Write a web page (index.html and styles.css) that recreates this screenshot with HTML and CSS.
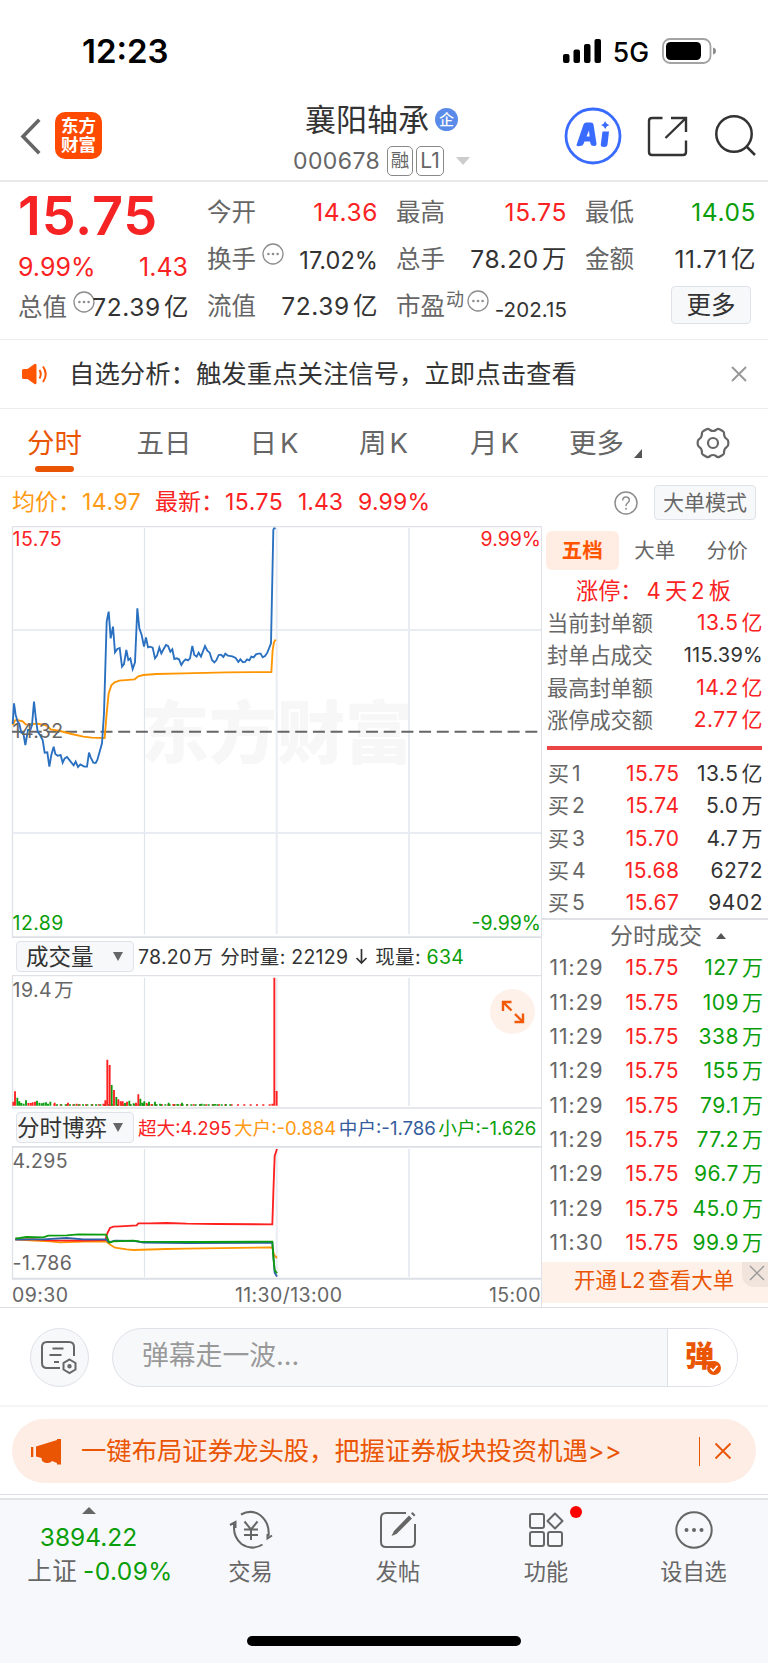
FILE: index.html
```html
<!DOCTYPE html>
<html lang="zh-CN">
<head>
<meta charset="utf-8">
<title>襄阳轴承 000678</title>
<link rel="stylesheet" href="styles.css">
</head>
<body>
<svg class="defs" width="0" height="0">
  <symbol id="dots" viewBox="0 0 22 22"><circle cx="11" cy="11" r="10" fill="none" stroke="#8c8c8c" stroke-width="1.3"/><g fill="#8c8c8c"><circle cx="6.4" cy="11" r="1.3"/><circle cx="11" cy="11" r="1.3"/><circle cx="15.6" cy="11" r="1.3"/></g></symbol>
</svg>

<div class="status">
  <span class="clock">12:23</span>
  <div class="status-right">
    <svg width="39" height="24" viewBox="0 0 39 24"><rect x="0" y="15" width="6.5" height="9" rx="2"/><rect x="10.5" y="10.5" width="6.5" height="13.5" rx="2"/><rect x="21" y="5" width="6.5" height="19" rx="2"/><rect x="31.5" y="0" width="6.5" height="24" rx="2"/></svg>
    <span class="net">5G</span>
    <svg width="56" height="26" viewBox="0 0 56 26"><rect x="1" y="1" width="47.5" height="24" rx="7" fill="none" stroke="#a3a3a3" stroke-width="1.8"/><rect x="4" y="4" width="35" height="18" rx="4.5"/><path d="M51 9.5q3 .8 3 3.5t-3 3.5z" fill="#8d8d8d"/></svg>
  </div>
</div>

<header class="header">
  <svg class="back" width="22" height="38" viewBox="0 0 22 38"><path d="M19 4L4 19.500L19 35" fill="none" stroke="#666" stroke-width="3.6" stroke-linecap="square"/></svg>
  <div class="logo"><span>东方</span><span>财富</span></div>
  <div class="title">
    <div class="name"><span>襄阳轴承</span><i class="corp">企</i></div>
    <div class="code"><span>000678</span><i class="tag">融</i><i class="tag l1">L1</i><svg width="14" height="8" viewBox="0 0 14 8"><path d="M0 0h14L7 8z" fill="#ccc"/></svg></div>
  </div>
  <div class="tools">
    <svg width="58" height="58" viewBox="0 0 58 58"><circle cx="29" cy="29" r="27" fill="#fff" stroke="#3a6bff" stroke-width="2.8"/><path d="M12.500 38L19.500 17.500Q20.300 15.500 22.500 15.500H27Q29 15.500 29.500 17.500L32.500 36.500Q32.800 39 30 39Q27 39 26.500 36.500L26 34.500H20.500L19.500 37Q18.700 39 16 39Q12 39.500 12.500 38ZM22.500 29.500H25.600L25 23.500Z" fill="#3a6bff" fill-rule="evenodd"/><path d="M38.500 24.500H45L43.500 37.500Q43 40 40 40Q36.500 40 36.800 37.500ZM41.200 14Q42 17.200 45.500 18Q42 19 41.200 22Q40.300 19 37 18Q40.300 17.200 41.200 14Z" fill="#3a6bff"/></svg>
    <svg width="44" height="44" viewBox="0 0 44 44" fill="none" stroke="#333" stroke-width="2.4"><path d="M17.500 4H7Q4 4 4 7V38Q4 41 7 41H38Q41 41 41 38V26.500M26 4H41V18M41 4L20.500 24"/></svg>
    <svg width="44" height="44" viewBox="0 0 44 44" fill="none" stroke="#333" stroke-width="2.500"><circle cx="21" cy="20" r="17.700"/><path d="M33.500 32.500L42 41"/></svg>
  </div>
</header>

<section class="quote">
  <div class="q-left">
    <div class="price">15.75</div>
    <div class="chg"><span>9.99%</span><span>1.43</span></div>
    <div class="cell"><label>总值</label><svg class="ic over"><use href="#dots"/></svg><b>72.39<u>亿</u></b></div>
  </div>
  <div class="q-col">
    <div class="cell"><label>今开</label><b class="red">14.36</b></div>
    <div class="cell"><label>换手</label><svg class="ic"><use href="#dots"/></svg><b class="pct">17.02%</b></div>
    <div class="cell"><label>流值</label><b>72.39<u>亿</u></b></div>
  </div>
  <div class="q-col">
    <div class="cell"><label>最高</label><b class="red">15.75</b></div>
    <div class="cell"><label>总手</label><b>78.20<u>万</u></b></div>
    <div class="cell"><label>市盈</label><sup>动</sup><svg class="ic pe"><use href="#dots"/></svg><b class="small">-202.15</b></div>
  </div>
  <div class="q-col">
    <div class="cell"><label>最低</label><b class="green">14.05</b></div>
    <div class="cell"><label>金额</label><b>11.71<u>亿</u></b></div>
    <div class="cell"><span class="more">更多</span></div>
  </div>
</section>

<div class="notice">
  <svg width="28" height="24" viewBox="0 0 28 24"><path d="M1 8.500Q1 7 2.500 7H6.500L13.500 2Q15 1.200 15.500 3V21Q15 22.800 13.500 22L6.500 17H2.500Q1 17 1 15.500Z" fill="#ff5500"/><path d="M18.500 8Q21 12 18.500 16.500M22 4.500Q27.500 12 22 20" fill="none" stroke="#ff5500" stroke-width="2"/></svg>
  <span>自选分析：触发重点关注信号，立即点击查看</span>
  <svg class="x" width="16" height="16" viewBox="0 0 16 16"><path d="M1 1L15 15M15 1L1 15" stroke="#999" stroke-width="2"/></svg>
</div>

<nav class="tabs">
  <span class="on">分时</span><span>五日</span><span>日<u>K</u></span><span>周<u>K</u></span><span>月<u>K</u></span>
  <span class="tmore">更多<svg width="8" height="9" viewBox="0 0 8 9"><path d="M8 0V9H0z" fill="#555"/></svg></span>
  <svg width="34" height="32" viewBox="0 0 34 32" fill="none" stroke="#666" stroke-width="2.200"><circle cx="17" cy="16" r="5"/><path stroke-linejoin="round" d="M10 2.500Q12.500 1 14 3Q17 5 20 3Q21.500 1 24 2.500L27 4.300Q28.500 5.300 28 7.500Q28.500 11 31 12.300Q32.500 13 32.300 16Q32.500 19 31 19.700Q28.500 21 28 24.500Q28.500 26.700 27 27.700L24 29.500Q21.500 31 20 29Q17 27 14 29Q12.500 31 10 29.500L7 27.700Q5.500 26.700 6 24.500Q5.500 21 3 19.700Q1.500 19 1.700 16Q1.500 13 3 12.300Q5.500 11 6 7.500Q5.500 5.300 7 4.300Z"/></svg>
</nav>

<div class="info">
  <span class="avg">均价：<em>14.97</em></span>
  <span class="last">最新：<em>15.75</em></span>
  <span class="red d1">1.43</span>
  <span class="red d2">9.99%</span>
  <svg width="24" height="24" viewBox="0 0 24 24" fill="none" stroke="#8c8c8c" stroke-width="1.500"><circle cx="12" cy="12" r="11"/><path d="M8.700 9.500Q8.700 6 12 6T15.300 9.300Q15.300 10.800 13.500 12Q12 13 12 15M12 16.800V18.700"/></svg>
  <span class="mode">大单模式</span>
</div>

<main class="board">
  <div class="charts">
    <svg class="chart" width="541" height="412" viewBox="0 526 541 412">
      <g class="watermark"><text x="141" y="758" textLength="272">东方财富</text></g>
      <path class="frame" d="M12.500 938V526.500H541"/>
      <path class="grid thin" d="M144.500 528V934"/>
      <path class="grid" d="M13 630H541M13 833H541M409 528V934M276.700 528V934"/>
      <path class="frame b" d="M12 937.300H541"/>
      <path d="M12 731.700H541" stroke="#666" stroke-width="2" stroke-dasharray="12 5.700"/>
      <g transform="translate(0 500) scale(.33333)" fill="none" stroke-width="5.600" stroke-linejoin="miter">
        <polyline stroke="#ff9500" points="38,675 45,661 52,660 68,664 77,673 95,674 105,671 118,672 138,676 152,688 180,693 215,702 250,710 275,713 314,714 320,640 326,580 334,556 344,547 358,542 404,538 415,529 430,525 470,522 550,520 680,517 814,516 818,450 822,426 827,419"/>
        <polyline stroke="#2a70c0" points="38,672 42,610 47,645 53,665 58,672 64,698 70,700 76,735 84,690 91,690 96,675 102,605 108,660 113,695 120,705 128,720 134,758 142,757 148,800 154,765 161,740 166,762 173,767 182,765 188,788 194,775 201,771 212,785 221,796 227,785 234,801 241,793 253,800 261,800 267,758 272,772 280,788 287,789 292,780 306,730 312,640 320,365 326,335 332,415 339,380 345,457 352,447 359,444 366,500 372,492 379,450 385,480 391,475 398,507 405,487 412,325 418,385 425,405 432,440 438,412 444,442 450,440 458,443 465,475 471,467 478,443 484,460 491,447 498,435 504,438 511,455 517,448 523,477 530,475 537,478 544,495 550,485 557,478 564,481 570,475 577,438 583,465 590,470 596,458 603,470 615,438 622,452 629,458 636,480 643,487 649,481 656,465 663,464 670,471 676,461 684,467 697,469 707,474 715,486 721,478 729,487 735,486 741,478 748,481 754,470 761,472 768,463 775,461 782,461 788,472 795,468 802,458 813,430 820,90 822,85 827,85"/>
      </g>
      <g class="axis"><text class="f-red" x="12.500" y="545.500">15.75</text><text class="f-red end" x="541" y="545.500">9.99%</text><text x="12.500" y="738">14.32</text><text class="f-green" x="12.500" y="930">12.89</text><text class="f-green end" x="541" y="930">-9.99%</text></g>
    </svg>

    <div class="sub">
      <span class="pick vol">成交量<i></i></span>
      <span class="vt">78.20<u>万</u></span><span class="vt">分时量: 22129</span><svg class="down" width="13" height="17" viewBox="0 0 13 17"><path d="M6.500 1V15M1.500 10L6.500 15L11.500 10" fill="none" stroke="#333" stroke-width="1.700"/></svg><span class="vt">现量: <em class="green">634</em></span>
    </div>

    <div class="volbox">
    <svg class="chart" width="541" height="134" viewBox="0 975 541 134">
      <path class="frame" d="M12.500 1109V975.500H541"/>
      <path class="grid thin" d="M144.500 978V1106"/>
      <path class="grid" d="M409 978V1106M276.700 978V1106"/>
      <path class="frame" d="M12 1108H541"/>
      <g class="axis"><text x="12.500" y="997">19.4</text><text x="54" y="997">万</text></g>
      <g transform="translate(0 900) scale(.33333)" fill="none" stroke-width="5.600">
        <path stroke="#ff2020" stroke-width="4" stroke-dasharray="6 13" d="M160 615H820"/>
        <path stroke="#0c9c10" stroke-width="4" stroke-dasharray="6 7" d="M168 615H700"/>
        <path stroke="#0c9c10" d="M52 617v-24M58 617v-13M64 617v-8M71 617v-6M78 617v-16M111 617v-15M118 617v-9M125 617v-7M131 617v-9M138 617v-10M144 617v-6M151 617v-12M335 617v-62M349 617v-26M375 617v-8M388 617v-15M401 617v-7M421 617v-21M427 617v-9M433 617v-13M447 617v-12M465 617v-12M480 617v-6M506 617v-9M532 617v-5M546 617v-9M605 617v-6M645 617v-5"/>
        <path stroke="#ff2020" d="M40 617v-12M45 617v-43M85 617v-8M92 617v-8M98 617v-10M105 617v-12M164 617v-9M204 617v-9M230 617v-6M310 617v-6M316 617v-16M322 617v-138M329 617v-122M342 617v-47M355 617v-19M362 617v-13M368 617v-13M381 617v-12M408 617v-9M415 617v-34M440 617v-8M455 617v-5M520 617v-5M817 617v-6M823 617v-384M830 617v-44"/>
      </g>
    </svg>
    <span class="expand"><svg width="24" height="24" viewBox="0 0 24 24" fill="none" stroke="#f25a0a" stroke-width="2.400"><path d="M2 11V2H10.500M2 2L10.500 10.500M13.500 22H22V13.500M22 22L14 14"/></svg></span>
    </div>

    <div class="sub flow">
      <span class="pick">分时博弈<i></i></span>
      <span class="f-red">超大:4.295</span><span class="f-orange">大户:-0.884</span><span class="f-blue">中户:-1.786</span><span class="f-green">小户:-1.626</span>
    </div>

    <svg class="chart" width="541" height="134" viewBox="0 1146 541 134">
      <path class="grid thin" d="M144.500 1149V1277"/>
      <path class="grid" d="M409 1149V1277M276.700 1149V1277"/>
      <path class="frame" d="M12.500 1146V1279"/>
      <path class="frame b" d="M12 1146.700H541M12 1278.700H541"/>
      <g class="axis"><text x="12.500" y="1168">4.295</text><text x="12.500" y="1270">-1.786</text></g>
      <g transform="translate(0 900) scale(.33333)" fill="none" stroke-width="5.500">
        <polyline stroke="#ff9500" points="46,1018 100,1022 150,1024 180,1027 250,1025 318,1024 332,1035 345,1043 380,1048 400,1050 500,1047 560,1046 817,1042 822,1065 831,1074"/>
        <polyline stroke="#ff2020" points="46,1018 100,1018 150,1021 200,1022 250,1022 316,1020 322,1000 330,984 340,980 360,979 410,976 415,970 450,970 500,969 560,971 650,972 817,973 820,880 824,768 831,747"/>
        <polyline stroke="#3060a8" points="46,1019 100,1018 130,1018 200,1014 250,1018 318,1018 326,1027 345,1022 405,1023 430,1028 560,1029 817,1028 824,1118 831,1130"/>
        <polyline stroke="#0c9c10" points="46,1015 60,1014 80,1011 130,1012 145,1007 200,1006 235,1003 318,1004 328,1028 340,1024 400,1022 420,1025 600,1026 800,1025 817,1025 820,1070 824,1110 831,1120"/>
      </g>
    </svg>
    <div class="times"><span>09:30</span><span class="mid">11:30/13:00</span><span>15:00</span></div>
  </div>

  <aside class="side">
    <div class="stabs"><span class="on">五档</span><span>大单</span><span>分价</span></div>
    <div class="limit">涨停：<em>4</em>天<em>2</em>板</div>
    <div class="seal">
      <div><label>当前封单额</label><b class="red">13.5<u>亿</u></b></div>
      <div><label>封单占成交</label><b class="pc">115.39%</b></div>
      <div><label>最高封单额</label><b class="red">14.2<u>亿</u></b></div>
      <div><label>涨停成交额</label><b class="red">2.77<u>亿</u></b></div>
    </div>
    <hr>
    <div class="bids">
      <div><label>买<u>1</u></label><b class="red">15.75</b><b>13.5<u>亿</u></b></div>
      <div><label>买<u>2</u></label><b class="red">15.74</b><b>5.0<u>万</u></b></div>
      <div><label>买<u>3</u></label><b class="red">15.70</b><b>4.7<u>万</u></b></div>
      <div><label>买<u>4</u></label><b class="red">15.68</b><b>6272</b></div>
      <div><label>买<u>5</u></label><b class="red">15.67</b><b>9402</b></div>
    </div>
    <div class="ticks-head">分时成交<i></i></div>
    <div class="ticks">
      <div><label>11:29</label><b class="red">15.75</b><b class="green">127<u>万</u></b></div>
      <div><label>11:29</label><b class="red">15.75</b><b class="green">109<u>万</u></b></div>
      <div><label>11:29</label><b class="red">15.75</b><b class="green">338<u>万</u></b></div>
      <div><label>11:29</label><b class="red">15.75</b><b class="green">155<u>万</u></b></div>
      <div><label>11:29</label><b class="red">15.75</b><b class="green">79.1<u>万</u></b></div>
      <div><label>11:29</label><b class="red">15.75</b><b class="green">77.2<u>万</u></b></div>
      <div><label>11:29</label><b class="red">15.75</b><b class="green">96.7<u>万</u></b></div>
      <div><label>11:29</label><b class="red">15.75</b><b class="green">45.0<u>万</u></b></div>
      <div><label>11:30</label><b class="red">15.75</b><b class="green">99.9<u>万</u></b></div>
    </div>
    <div class="l2">开通<em>L2</em>查看大单<span><svg width="16" height="16" viewBox="0 0 16 16"><path d="M1 1L15 15M15 1L1 15" stroke="#999" stroke-width="1.400"/></svg></span></div>
  </aside>
</main>

<div class="comment">
  <span class="round"><svg width="40" height="36" viewBox="0 0 40 36" fill="none" stroke="#666" stroke-width="2"><path d="M35 16V7Q35 2 30 2H8Q3 2 3 7V23Q3 28 8 28H21M13.500 8.500H24.500M10.500 15H22.500M15 22H20" /><path d="M30.500 19.500L36.500 23V29.500L30.500 33L24.500 29.500V23Z"/><circle cx="30.500" cy="26.200" r="1.200"/></svg></span>
  <div class="field"><span>弹幕走一波...</span><div class="dan"><span>弹</span><svg width="14" height="14" viewBox="0 0 14 14"><circle cx="7" cy="7" r="7" fill="#ea5504"/><path d="M3.500 7L6.200 9.800L10.500 4.700" fill="none" stroke="#fff" stroke-width="1.600"/></svg></div></div>
</div>

<div class="promo-wrap"><div class="promo">
  <svg width="32" height="27" viewBox="0 0 32 27" fill="#ea5504"><path d="M1 9H3.300V19H1zM6 8.500L27 2V1H31V26.500H27V25L22 23Q20 26 14.500 24.500Q11.500 23.500 11.500 20L6 18.500Z"/></svg>
  <span>一键布局证券龙头股，把握证券板块投资机遇&gt;&gt;</span>
  <i></i>
  <svg class="px" width="18" height="18" viewBox="0 0 18 18"><path d="M1.500 1.500L16.500 16.500M16.500 1.500L1.500 16.500" stroke="#ea5504" stroke-width="1.800"/></svg>
</div></div>

<footer class="footer">
  <div class="index">
    <svg width="14" height="7" viewBox="0 0 14 7"><path d="M7 0L14 7H0z" fill="#666"/></svg>
    <span class="green">3894.22</span>
    <span class="sh">上证<em class="green">-0.09%</em></span>
  </div>
  <div class="item">
    <svg width="44" height="40" viewBox="0 0 44 40" fill="none" stroke="#666" stroke-width="2"><path d="M12 4.500Q22 -1 31 5Q41 13 39.500 26M33.500 34.500Q23 41 12.500 34Q3 26 5.500 12.500M1 15L6.500 12V18M38.500 24V28.500L43 25.500"/><path d="M15.500 11.500L22 19.500L28.500 11.500M22 19.500V30M15 19.500H29M15 25H29"/></svg>
    <span>交易</span>
  </div>
  <div class="item">
    <svg width="40" height="40" viewBox="0 0 40 40" fill="none" stroke="#666" stroke-width="2"><path d="M28 3H8Q3 3 3 8V32Q3 37 8 37H32Q37 37 37 32V14"/><path d="M13.500 26L16 21L31 5.500L34 8.500L18.500 24ZM33 3.500L34.500 2L37.500 5L36 6.500Z" fill="#666" stroke="none"/></svg>
    <span>发帖</span>
  </div>
  <div class="item">
    <svg width="40" height="40" viewBox="0 0 40 40" fill="none" stroke="#666" stroke-width="2"><rect x="4" y="4" width="14" height="14" rx="2"/><rect x="4" y="22" width="14" height="14" rx="2"/><rect x="22" y="22" width="14" height="14" rx="2"/><path d="M29 3.500L36.500 11L29 18.500L21.500 11Z" stroke-linejoin="round"/></svg>
    <i class="dot"></i>
    <span>功能</span>
  </div>
  <div class="item">
    <svg width="40" height="40" viewBox="0 0 40 40"><circle cx="20" cy="20" r="17.700" fill="none" stroke="#666" stroke-width="2"/><g fill="#666"><circle cx="12.500" cy="20" r="2"/><circle cx="20" cy="20" r="2"/><circle cx="27.500" cy="20" r="2"/></g></svg>
    <span>设自选</span>
  </div>
</footer>
<div class="home"><i></i></div>
</body>
</html>
```
FILE: styles.css
```css
* { box-sizing: border-box; }
body {
  margin: 0;
  width: 768px;
  height: 1663px;
  overflow: hidden;
  background: #fff;
  color: #333;
  font-family: Inter, "Noto Sans CJK SC", sans-serif;
  font-size: 24px;
  line-height: 1;
}
svg { display: block; flex: none; }
.defs { position: absolute; }
i, em { font-style: normal; }
b { font-weight: 400; }
u { text-decoration: none; margin-left: 3px; }
span, label, b { white-space: nowrap; }
.red { color: #fa2222; }
.green { color: #0a9e0a; }
.f-red { fill: #fa2222; color: #fa2222; }
.f-green { fill: #0a9e0a; color: #0a9e0a; }
.f-orange { color: #ff9a14; }
.f-blue { color: #355c9c; }

/* status bar */
.status { height: 102px; padding: 0 50px 0 82px; display: flex; justify-content: space-between; color: #000; }
.clock { font-size: 33px; font-weight: 600; line-height: 103px; }
.status-right { display: flex; align-items: center; height: 102px; }
.net { font-size: 26.500px; font-weight: 500; margin: 2px 13px 0 11px; }

/* header */
.header { height: 80px; border-bottom: 2px solid #e9e9eb; display: flex; position: relative; }
.back { margin: 15px 0 0 19px; }
.logo { margin: 10px 0 0 14px; width: 47px; height: 47px; border-radius: 10px; background: #ff4a00; color: #fff; font-size: 17.500px; font-weight: 700; line-height: 18.500px; text-align: center; padding-top: 5px; display: flex; flex-direction: column; }
.title { width: 200px; margin-left: 191px; }
.name { display: flex; margin-left: 12px; font-size: 31px; line-height: 36px; }
.corp { width: 23px; height: 23px; margin: 6px 0 0 6px; border-radius: 50%; background: #5b8be8; color: #fff; font-size: 15px; line-height: 23px; font-weight: 500; text-align: center; }
.code { display: flex; align-items: center; height: 30px; margin-top: 8px; color: #666; font-size: 23px; letter-spacing: .4px; }
.code span { width: 94px; }
.tag { width: 26px; height: 30px; margin-right: 3px; border: 1.500px solid #888; border-radius: 5px; font-size: 18.500px; line-height: 27px; text-align: center; letter-spacing: 0; }
.tag.l1 { width: 28px; font-size: 21px; margin-right: 12px; }
.tools { display: flex; align-items: center; position: absolute; left: 564px; top: 5px; height: 58px; }
.tools svg + svg { margin-left: 23px; }
.tools svg:last-child { margin-left: 24px; }

/* quote */
.quote { height: 158px; border-bottom: 1px solid #ededed; display: grid; grid-template-columns: 170px 170px 170px 170px; column-gap: 19px; padding-left: 18px; }
.price { height: 67px; line-height: 67px; font-size: 54px; font-weight: 600; letter-spacing: .8px; color: #f52323; }
.chg { display: flex; justify-content: space-between; height: 36px; line-height: 36px; color: #fa2222; font-size: 25px; }
.q-col { padding-top: 7px; }
.cell { display: flex; height: 47px; line-height: 47px; font-size: 24.500px; }
.q-left .cell { height: 44px; line-height: 44px; }
.cell label { color: #666; }
.cell b { margin-left: auto; letter-spacing: .6px; margin-right: -1px; }
.cell .pct { font-size: 23.600px; letter-spacing: 0; padding-top: 1px; }
.cell .small { font-size: 20.500px; letter-spacing: .1px; padding-top: 3px; }
.cell sup { font-size: 18px; line-height: 34px; color: #666; margin-left: 1px; height: 47px; vertical-align: baseline; }
.ic { width: 22px; height: 22px; margin: 7px 0 0 6px; }
.ic.over { margin: 6px -20px 0 6px; }
.ic.pe { margin-left: 3px; margin-right: -10px; }
.more { width: 80px; height: 38px; margin: 3px 4px 0 auto; line-height: 37px; text-align: center; border: 1.500px solid #dfe2e8; border-radius: 4px; background: #f7f8fa; color: #333; }

/* notice */
.notice { height: 69px; border-bottom: 1px solid #ededed; display: flex; align-items: center; padding: 0 21px 1px; font-size: 25.400px; }
.notice span { margin-left: 20px; }
.notice .x { margin-left: auto; }

/* period tabs */
.tabs { height: 68px; border-bottom: 1px solid #ededed; position: relative; display: grid; grid-template-columns: 109px 110px 110px 109px 113px 109px 105px; align-items: center; justify-items: center; color: #666; font-size: 27.500px; line-height: 66px; }
.tabs .on { color: #ea5504; position: relative; }
.tabs .on::after { content: ""; position: absolute; left: 8px; bottom: 4px; width: 39px; height: 6px; border-radius: 3px; background: #ea5504; }
.tmore { display: flex; align-items: flex-end; }
.tmore svg { margin: 0 0 18px 10px; }

/* average row */
.info { height: 49px; display: flex; align-items: center; padding: 2px 12px 0; font-size: 23px; }
.info em { margin-left: 1px; letter-spacing: .5px; }
.avg { color: #ff9a14; width: 143px; }
.last { color: #fa2222; width: 143px; }
.d1 { width: 60px; }
.d2 { width: 256px; letter-spacing: .2px; }
.mode { width: 102px; height: 35px; margin-left: auto; border: 1.500px solid #dfe2e8; border-radius: 4px; background: #f7f8fa; color: #666; font-size: 21px; line-height: 33px; text-align: center; }

/* charts */
.board { display: flex; height: 782px; border-bottom: 1px solid #dcdee4; }
.charts { width: 541px; }
.frame { fill: none; stroke: #dfe1e6; stroke-width: 1.300; }
.frame.b { stroke: #dcdfe5; stroke-width: 2; }
.grid { fill: none; stroke: #e9ecf2; stroke-width: 2; }
.grid.thin { stroke-width: 1.200; stroke: #dfe3ea; }
.axis text { font-size: 19.500px; letter-spacing: .45px; }
.axis .end { letter-spacing: 0; }
.axis text:not([class]) { fill: #666; }
.end { text-anchor: end; }
.watermark text { font-size: 68px; font-weight: 900; fill: #f7f7f7; }
.sub { height: 37px; display: flex; align-items: center; padding-left: 16px; font-size: 19.500px; letter-spacing: .27px; }
.pick { flex: none; width: 118px; height: 31px; margin-right: 4px; padding: 0 10px 0 9px; border: 1.500px solid #dfe2e8; border-radius: 4px; background: #f7f8fa; font-size: 22.500px; line-height: 29px; letter-spacing: 0; display: flex; align-items: center; justify-content: space-between; }
.pick i { border: 5px solid transparent; border-top: 9px solid #666; border-bottom: 0; }
.vt { margin-right: 7px; padding-top: 2px; }
.vt u { margin-left: 2px; }
.down { margin-right: 7px; }
.volbox { position: relative; height: 134px; }
.expand { position: absolute; left: 490px; top: 14px; width: 45px; height: 45px; border-radius: 50%; background: #fef1ea; padding: 11px; }
.flow { font-size: 18.600px; letter-spacing: 0; }
.flow .pick { padding-left: 0; }
.flow > span + span { margin-right: 2.500px; padding-top: 1px; }
.times { height: 28px; display: flex; justify-content: space-between; padding: 0 0 0 12px; font-size: 19.500px; line-height: 30px; letter-spacing: .4px; color: #666; }
.times .mid { margin-left: 20px; }

/* order book */
.side { width: 227px; border-left: 1.500px solid #dfe1e6; font-size: 21px; }
.stabs { display: flex; margin: 5px 0 0 4px; font-size: 20.500px; line-height: 39px; color: #666; }
.stabs span { width: 72.500px; text-align: center; border-radius: 6px; }
.stabs .on { background: #ffede4; color: #ff5500; font-weight: 700; }
.limit { padding-left: 34px; line-height: 42px; height: 36px; font-size: 22.200px; color: #fa2222; }
.limit em { margin: 0 4px; }
.seal, .bids { padding: 0 5px; line-height: 32.300px; }
.seal { padding-top: 1px; }
.seal div, .bids div, .ticks div { display: flex; justify-content: space-between; }
.side label { color: #666; }
.seal label { font-size: 21.200px; }
.side b { letter-spacing: .5px; }
.side .pc { font-size: 20px; letter-spacing: .25px; }
.side hr { height: 4px; margin: 10px 6px 8px 5px; border: 0; background: #ea4444; }
.bids { border-bottom: 2px solid #dfe1e6; height: 162px; }
.bids div, .ticks div { display: grid; grid-template-columns: 50px 82px 83px; }
.bids label { padding-left: 1px; }
.bids b, .ticks b { text-align: right; }
.ticks-head { display: flex; justify-content: center; align-items: center; height: 32px; font-size: 23px; color: #666; padding-left: 26px; }
.ticks-head i { margin-left: 14px; border: 5px solid transparent; border-bottom: 6px solid #555; border-top: 0; }
.ticks { margin-top: -1px; padding: 0 5px 0 6px; line-height: 34.350px; }
.ticks label { padding-left: 1.500px; letter-spacing: 1px; }
.ticks div { grid-template-columns: 50px 81px 84.500px; }
.l2 { position: relative; margin-top: 2px; height: 41px; padding-left: 32px; line-height: 36px; font-size: 21.500px; background: #fdf1ea; color: #ea5504; }
.l2 em { margin: 0 3px; }
.l2 span { position: absolute; right: 0; top: 0; width: 26px; height: 25px; padding: 3px 0 0 7px; border-bottom-left-radius: 12px; background: #f0e4dd; }

/* comment bar */
.comment { height: 99px; border-bottom: 2px solid #f5f5f8; display: flex; padding: 20px 30px 0; }
.round { width: 59px; height: 59px; padding: 11px 8px; border-radius: 50%; border: 1.500px solid #dfe1e8; background: #f7f8fa; }
.field { display: flex; justify-content: space-between; width: 626px; height: 59px; margin-left: 23px; border: 1.500px solid #dfe1e8; border-radius: 30px; background: #f7f8fa; overflow: hidden; font-size: 26.800px; line-height: 52px; color: #999; padding-left: 29px; }
.dan { position: relative; width: 70px; background: #fff; border-left: 1.500px solid #dfe1e8; color: #ea5504; font-size: 29px; line-height: 56px; font-weight: 900; padding-left: 17px; }
.dan svg { position: absolute; left: 39px; top: 32px; }

/* promo banner */
.promo-wrap { height: 88px; padding: 12px 12px 0; border-bottom: 1px solid #dfe1e8; }
.promo { height: 64px; border-radius: 32px; background: #feede5; display: flex; align-items: center; padding: 0 24px 0 18px; color: #ea5504; font-size: 25.350px; }
.promo span { margin-left: 19px; }
.promo i { width: 1.500px; height: 29px; margin-left: auto; margin-right: 14px; background: #ea5504; }

/* bottom bar */
.footer { height: 128px; margin-top: 3px; border-top: 2px solid #e2e3e7; background: #f7f8fb; display: grid; grid-template-columns: 177px 147px 148px 148px 147px; color: #666; font-size: 22.200px; }
.index { display: flex; flex-direction: column; align-items: center; padding: 7px 0 0; font-size: 24.500px; }
.index span { line-height: 34px; }
.index .green { margin-top: 6px; }
.index .sh { margin-left: 23px; letter-spacing: .4px; }
.sh em { margin-left: 6px; font-size: 24.500px; }
.item { position: relative; display: flex; flex-direction: column; align-items: center; padding-top: 10px; }
.item span { line-height: 44px; }
.dot { position: absolute; left: 98px; top: 6px; width: 12px; height: 12px; border-radius: 50%; background: #f00; }
.home { height: 37px; padding-top: 10px; background: #f7f8fb; }
.home i { display: block; width: 274px; height: 10px; margin: 0 auto; border-radius: 5px; background: #000; }
```
